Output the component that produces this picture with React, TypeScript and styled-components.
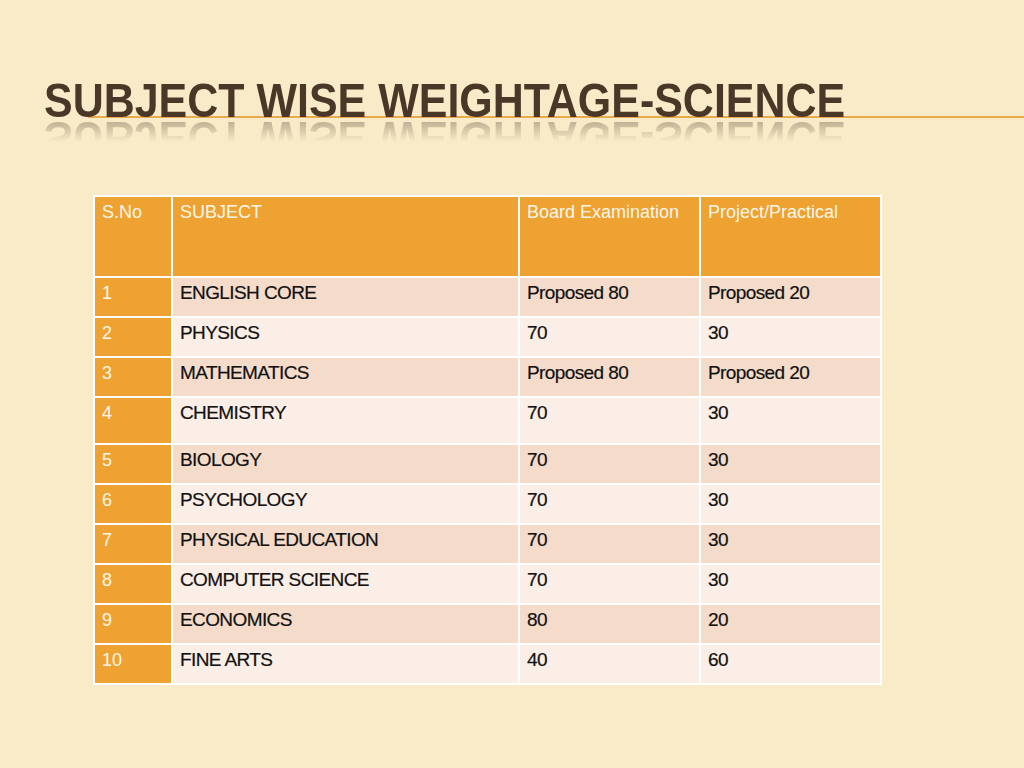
import React from "react";
import styled, {createGlobalStyle} from "styled-components";

const GlobalStyle = createGlobalStyle`
  html, body {
    margin: 0;
    padding: 0;
    background: #faebc8;
  }
  body {
    font-family: "Liberation Sans", Arial, sans-serif;
  }
`;

const Page = styled.div`
  width: 1024px;
  height: 768px;
  display: flex;
  flex-direction: column;
  overflow: hidden;
`;

const TitleBar = styled.div`
  position: relative;
  height: 195px;
  padding: 81px 0 0 44px;
  box-sizing: border-box;

  &::after {
    content: "";
    position: absolute;
    left: 88px;
    right: 0;
    top: 116px;
    height: 2px;
    background: #eaa94b;
  }
`;

const Title = styled.h1`
  position: relative;
  z-index: 1;
  display: inline-block;
  margin: 0;
  font-family: "Liberation Sans", sans-serif;
  font-weight: 700;
  font-size: 48px;
  line-height: 40px;
  color: #4a3728;
  white-space: nowrap;
  transform: scaleX(0.895);
  transform-origin: left top;
  -webkit-box-reflect: below -3px linear-gradient(transparent 40%, rgba(255, 255, 255, 0.38));
`;

const Table = styled.table`
  margin-left: 93px;
  width: 787px;
  border-collapse: collapse;
  table-layout: fixed;
  border: 2px solid #fff;
`;

const HeadCell = styled.th<{ $w: number }>`
  box-sizing: border-box;
  width: ${p => p.$w}px;
  height: 81px;
  padding: 5px 7px;
  background: #eda231;
  color: #fef6e8;
  border: 2px solid #fff;
  font-weight: 400;
  font-size: 18px;
  text-align: left;
  vertical-align: top;
`;

const Row = styled.tr<{ $odd: boolean; $tall?: boolean }>`
  height: ${p => (p.$tall ? 47 : 40)}px;
  background: ${p => (p.$odd ? "#f5dcca" : "#faeee6")};
`;

const NumCell = styled.td`
  padding: 5px 7px 3px;
  background: #eda231;
  color: #fef6e8;
  border: 2px solid #fff;
  font-size: 18px;
  vertical-align: top;
`;

const Cell = styled.td`
  padding: 4px 7px 3px;
  color: #111;
  border: 2px solid #fff;
  font-size: 19px;
  letter-spacing: -0.6px;
  -webkit-text-stroke: 0.2px #111;
  vertical-align: top;
`;

const rows = [
  ["ENGLISH CORE", "Proposed 80", "Proposed 20"],
  ["PHYSICS", "70", "30"],
  ["MATHEMATICS", "Proposed 80", "Proposed 20"],
  ["CHEMISTRY", "70", "30"],
  ["BIOLOGY", "70", "30"],
  ["PSYCHOLOGY", "70", "30"],
  ["PHYSICAL EDUCATION", "70", "30"],
  ["COMPUTER SCIENCE", "70", "30"],
  ["ECONOMICS", "80", "20"],
  ["FINE ARTS", "40", "60"],
];

export default function App() {
  return (
    <Page>
      <GlobalStyle/>
      <TitleBar>
        <Title>SUBJECT WISE WEIGHTAGE-SCIENCE</Title>
      </TitleBar>
      <Table>
        <thead>
          <tr>
            <HeadCell $w={78}>S.No</HeadCell>
            <HeadCell $w={347}>SUBJECT</HeadCell>
            <HeadCell $w={181}>Board Examination</HeadCell>
            <HeadCell $w={181}>Project/Practical</HeadCell>
          </tr>
        </thead>
        <tbody>
          {rows.map((r, i) => (
            <Row key={i} $odd={i % 2 === 0} $tall={i === 3}>
              <NumCell>{i + 1}</NumCell>
              <Cell>{r[0]}</Cell>
              <Cell>{r[1]}</Cell>
              <Cell>{r[2]}</Cell>
            </Row>
          ))}
        </tbody>
      </Table>
    </Page>
  );
}
